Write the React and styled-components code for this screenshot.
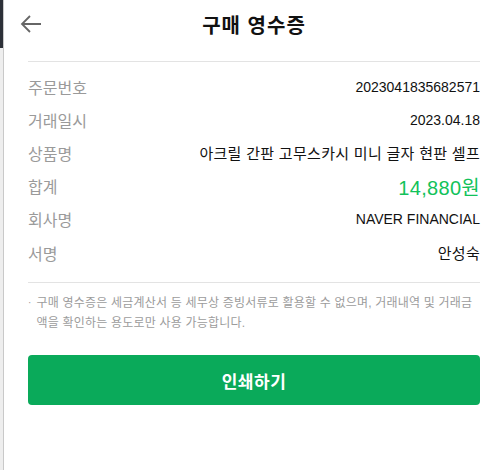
import React from "react";
import styled, { createGlobalStyle } from "styled-components";

const GlobalStyle = createGlobalStyle`
  html, body {
    margin: 0;
    padding: 0;
    background: #ffffff;
  }
  body {
    font-family: "Liberation Sans", "Noto Sans CJK KR", sans-serif;
  }
`;

const Page = styled.div`
  display: flex;
  width: 500px;
  height: 470px;
  overflow: hidden;
`;

const BackPage = styled.div`
  width: 3px;
  flex-shrink: 0;
  display: flex;
  flex-direction: column;
  background: #eeeeee;
  border-right: 1px solid #c9c9c9;
`;

const BackTop = styled.div`
  height: 48px;
  background: #2c3038;
`;

const Panel = styled.div`
  flex: 1;
  background: #ffffff;
  padding: 0 20px 0 24px;
  display: flex;
  flex-direction: column;
`;

const Header = styled.div`
  height: 48px;
  display: grid;
  grid-template-columns: 1fr auto 1fr;
  align-items: center;
`;

const BackButton = styled.button`
  border: none;
  background: none;
  padding: 0;
  margin-left: -8px;
  width: 24px;
  height: 20px;
  display: flex;
  align-items: center;
  cursor: pointer;
`;

const Title = styled.h1`
  margin: 0;
  font-size: 20px;
  font-weight: 700;
  color: #111111;
  letter-spacing: 1px;
`;

const Divider = styled.hr`
  border: none;
  height: 1px;
  background: #e3e3e3;
  margin: ${(p) => p.$top || 0}px 0 0;
`;

const InfoList = styled.dl`
  margin: 0;
  padding: 8px 0 13px;
`;

const Row = styled.div`
  display: flex;
  justify-content: space-between;
  align-items: center;
  height: 33.2px;
`;

const Label = styled.dt`
  font-size: 16px;
  color: #9a9a9a;
`;

const valueSize = { total: 20, ko: 15, en: 14 };

const Value = styled.dd`
  margin: 0;
  font-size: ${(p) => valueSize[p.$kind]}px;
  color: ${(p) => (p.$kind === "total" ? "#12c25a" : "#111111")};
  letter-spacing: ${(p) => (p.$kind === "en" ? 0 : 0.3)}px;
`;

const Note = styled.p`
  display: flex;
  gap: 5px;
  margin: 10px 0 0;
  font-size: 12px;
  line-height: 20px;
  color: #9c9c9c;
  letter-spacing: 0.2px;
`;

const Bullet = styled.span`
  flex-shrink: 0;
  font-size: 10px;
`;

const PrintButton = styled.button`
  margin-top: 22px;
  height: 50px;
  width: 100%;
  border: none;
  border-radius: 4px;
  background: #0aaa5a;
  color: #ffffff;
  font-family: "Noto Sans CJK KR", sans-serif;
  font-size: 17px;
  font-weight: 700;
  letter-spacing: 0.5px;
  cursor: pointer;
`;

const rows = [
  ["주문번호", "2023041835682571", "en"],
  ["거래일시", "2023.04.18", "en"],
  ["상품명", "아크릴 간판 고무스카시 미니 글자 현판 셀프", "ko"],
  ["합계", "14,880원", "total"],
  ["회사명", "NAVER FINANCIAL", "en"],
  ["서명", "안성숙", "ko"],
];

export default function App() {
  return (
    <Page>
      <GlobalStyle />
      <BackPage>
        <BackTop />
      </BackPage>
      <Panel>
        <Header>
          <BackButton aria-label="뒤로">
            <svg width="22" height="18" viewBox="0 0 22 18" fill="none">
              <path
                d="M21 9H2M10 1L2 9l8 8"
                stroke="#666666"
                strokeWidth="1.8"
              />
            </svg>
          </BackButton>
          <Title>구매 영수증</Title>
          <span />
        </Header>
        <Divider $top={13} />
        <InfoList>
          {rows.map(([label, value, kind]) => (
            <Row key={label}>
              <Label>{label}</Label>
              <Value $kind={kind}>{value}</Value>
            </Row>
          ))}
        </InfoList>
        <Divider />
        <Note>
          <Bullet>·</Bullet>
          <span>
            구매 영수증은 세금계산서 등 세무상 증빙서류로 활용할 수 없으며, 거래내역 및 거래금액을 확인하는 용도로만 사용 가능합니다.
          </span>
        </Note>
        <PrintButton>인쇄하기</PrintButton>
      </Panel>
    </Page>
  );
}
